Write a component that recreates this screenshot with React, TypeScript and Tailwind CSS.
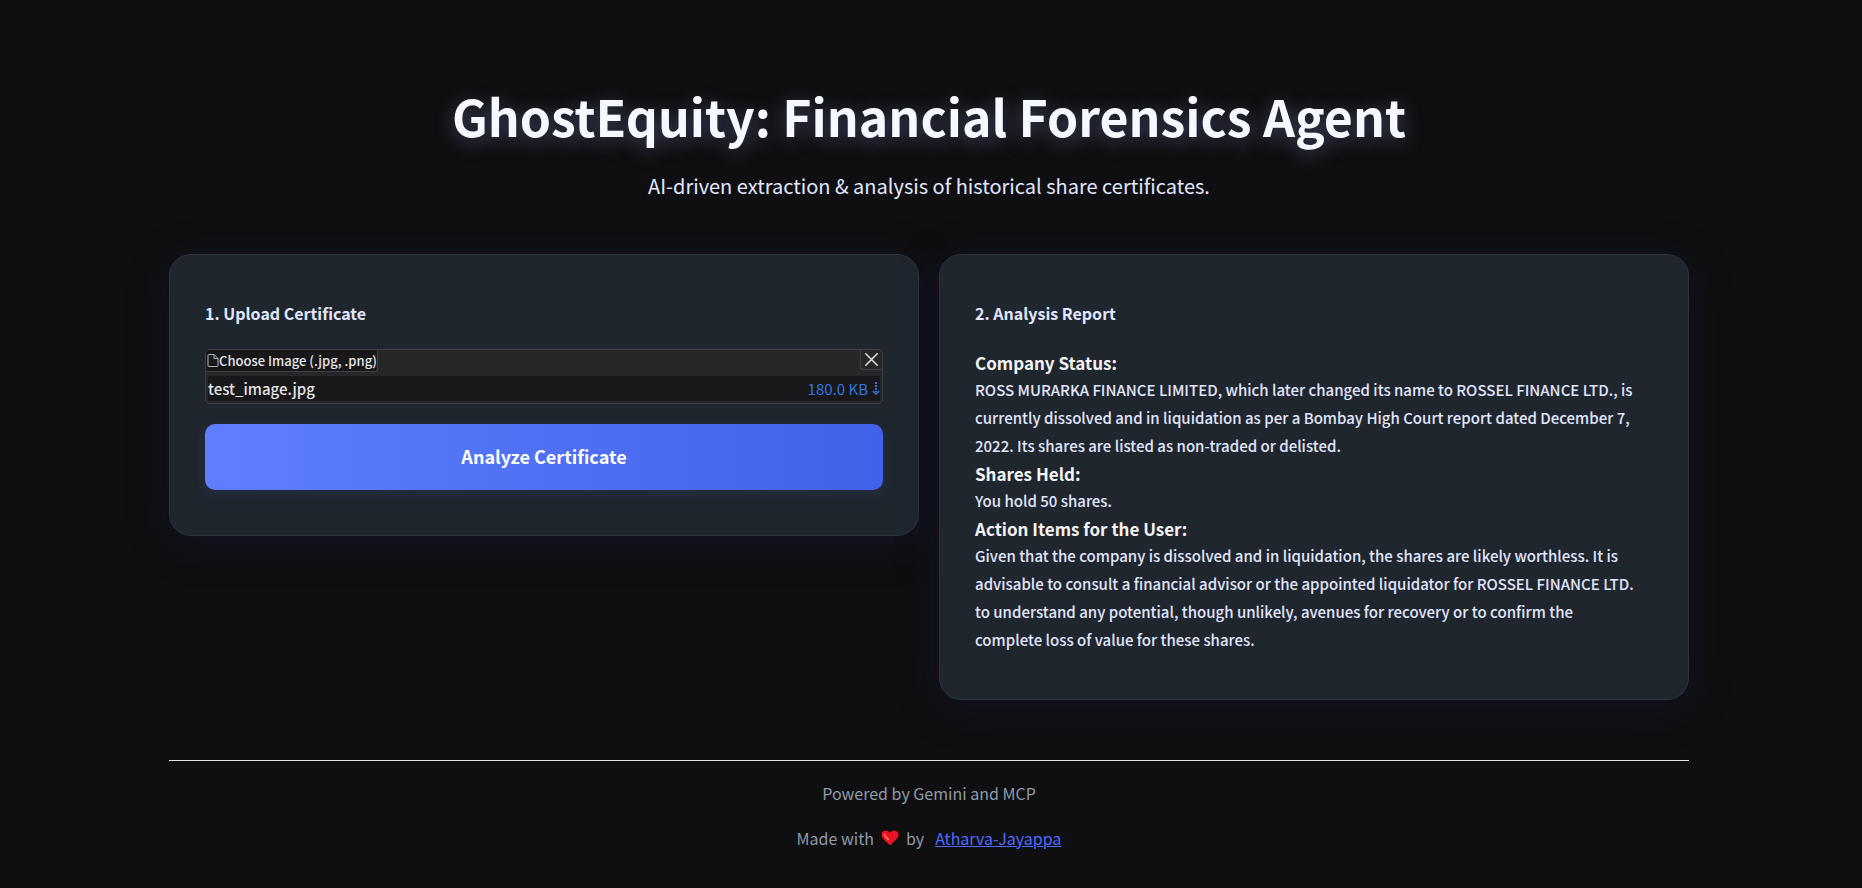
import type { ReactNode } from "react";

type Section = { title: string; body: string };

const report: Section[] = [
  {
    title: "Company Status:",
    body: "ROSS MURARKA FINANCE LIMITED, which later changed its name to ROSSEL FINANCE LTD., is currently dissolved and in liquidation as per a Bombay High Court report dated December 7, 2022. Its shares are listed as non-traded or delisted.",
  },
  { title: "Shares Held:", body: "You hold 50 shares." },
  {
    title: "Action Items for the User:",
    body: "Given that the company is dissolved and in liquidation, the shares are likely worthless. It is advisable to consult a financial advisor or the appointed liquidator for ROSSEL FINANCE LTD. to understand any potential, though unlikely, avenues for recovery or to confirm the complete loss of value for these shares.",
  },
];

function Card({ title, children }: { title: string; children: ReactNode }) {
  return (
    <section className="min-w-0 flex-1 rounded-[22px] border border-[#2f353d] bg-[#20262e] px-[35px] pt-[46px] pb-[45px] shadow-[0_8px_40px_rgba(30,27,75,0.35)]">
      <h2 className="mb-6 text-base leading-6 font-bold text-[#e0e7ff]">{title}</h2>
      {children}
    </section>
  );
}

function FileIcon() {
  return (
    <svg className="h-[13px] w-3 shrink-0 text-[#b4b4b8]" viewBox="0 0 12 13" fill="none" stroke="currentColor" strokeLinejoin="round" aria-hidden="true">
      <path d="M7 0.5H1.8Q1 0.5 1 1.3V11.7Q1 12.5 1.8 12.5H10.2Q11 12.5 11 11.7V4.5L7 0.5V4.5H11" />
    </svg>
  );
}

function CloseIcon() {
  return (
    <svg className="size-[13px]" viewBox="0 0 13 13" fill="none" stroke="currentColor" strokeWidth="1.5" strokeLinecap="round" aria-hidden="true">
      <path d="M0.8 0.8 12.2 12.2M12.2 0.8 0.8 12.2" />
    </svg>
  );
}

function DownIcon() {
  return (
    <svg className="h-[13px] w-2" viewBox="0 0 8 13" fill="none" stroke="currentColor" aria-hidden="true">
      <path d="M4 0V10" strokeWidth="2" strokeDasharray="2 1" />
      <path d="M0.8 9 4 12 7.2 9" strokeWidth="1.6" />
    </svg>
  );
}

function Heart() {
  return (
    <svg className="mx-1.5 h-[18px] w-5" viewBox="0 0 20 18" role="img" aria-label="love">
      <path
        d="M10 17C7.5 14.6 4 11.6 2.100 9.200C0.400 7 0.500 4 2.300 2.300C4.500 0.300 8.200 0.800 10 3.200C11.800 0.800 15.500 0.300 17.700 2.300C19.500 4 19.600 7 17.900 9.200C16 11.600 12.500 14.600 10 17Z"
        fill="#e81224"
        stroke="#000"
      />
      <path d="M4.500 5.200C4.700 7 6.500 9 8.400 10.600" fill="none" stroke="#f4735c" strokeWidth="1.600" strokeLinecap="round" />
    </svg>
  );
}

export default function App() {
  return (
    <div className="min-h-screen bg-[#0f0f11] pt-20 pr-5 pb-8 pl-4 font-['Noto_Sans_CJK_SC','Noto_Sans',sans-serif] text-[#e0e7ff]">
      <div className="mx-auto max-w-[1520px]">
        <header className="text-center">
          <h1 className="text-[50px] leading-[70px] font-bold text-[#f5f8ff] [text-shadow:0_4px_20px_rgba(165,180,252,0.35)]">
            GhostEquity: Financial Forensics Agent
          </h1>
          <p className="mt-5 text-xl leading-8">
            AI-driven extraction &amp; analysis of historical share certificates.
          </p>
        </header>

        <main className="mt-[52px] flex items-start gap-5">
          <Card title="1. Upload Certificate">
            <div className="rounded-[5px] border border-[#3f3f46] bg-[#27272a] text-[#e4e4e7]">
              <div className="flex items-start justify-between">
                <label
                  htmlFor="certificate"
                  className="flex h-[22px] cursor-pointer items-center rounded-tl-[4px] rounded-br-[3px] border-r border-b border-[#3f3f46] bg-[#18181b] pl-px text-[13px] leading-5 font-medium"
                >
                  <FileIcon />
                  Choose Image (.jpg, .png)
                  <input id="certificate" type="file" accept=".jpg,.png" className="sr-only" />
                </label>
                <button
                  type="button"
                  aria-label="Clear file"
                  className="flex h-5 w-[22px] items-center justify-center rounded-bl-[3px] border-b border-l border-[#3f3f46]"
                >
                  <CloseIcon />
                </button>
              </div>
              <div className="mx-0.5 mt-1 mb-0.5 flex h-[25px] items-center justify-between bg-[#18181b] text-[15px] leading-6">
                <span className="font-medium">test_image.jpg</span>
                <a href="#download" className="flex items-center gap-1 text-[#3575e2]">
                  180.0 KB
                  <DownIcon />
                </a>
              </div>
            </div>
            <button
              type="button"
              className="mt-5 block h-[66px] w-full rounded-[10px] bg-linear-to-r from-[#5f7fff] to-[#4161ea] pb-0.5 text-lg font-bold text-white shadow-[0_4px_14px_rgba(79,110,247,0.1)]"
            >
              Analyze Certificate
            </button>
          </Card>

          <Card title="2. Analysis Report">
            <div className="pr-4">
              {report.map(({ title, body }) => (
                <section key={title}>
                  <h3 className="text-[17px] leading-[27px] font-bold text-[#f4f4f5]">{title}</h3>
                  <p className="text-[15px] leading-7 font-medium">{body}</p>
                </section>
              ))}
            </div>
          </Card>
        </main>

        <footer className="mt-[60px] border-t border-[#e4e4e7] pt-[18px] text-center text-base leading-7 text-[#8e9baa]">
          <p>Powered by Gemini and MCP</p>
          <p className="mt-[17px] flex items-center justify-center">
            Made with
            <Heart />
            by
            <a href="#author" className="ml-[11px] text-[#4f6bff] underline">
              Atharva-Jayappa
            </a>
          </p>
        </footer>
      </div>
    </div>
  );
}
